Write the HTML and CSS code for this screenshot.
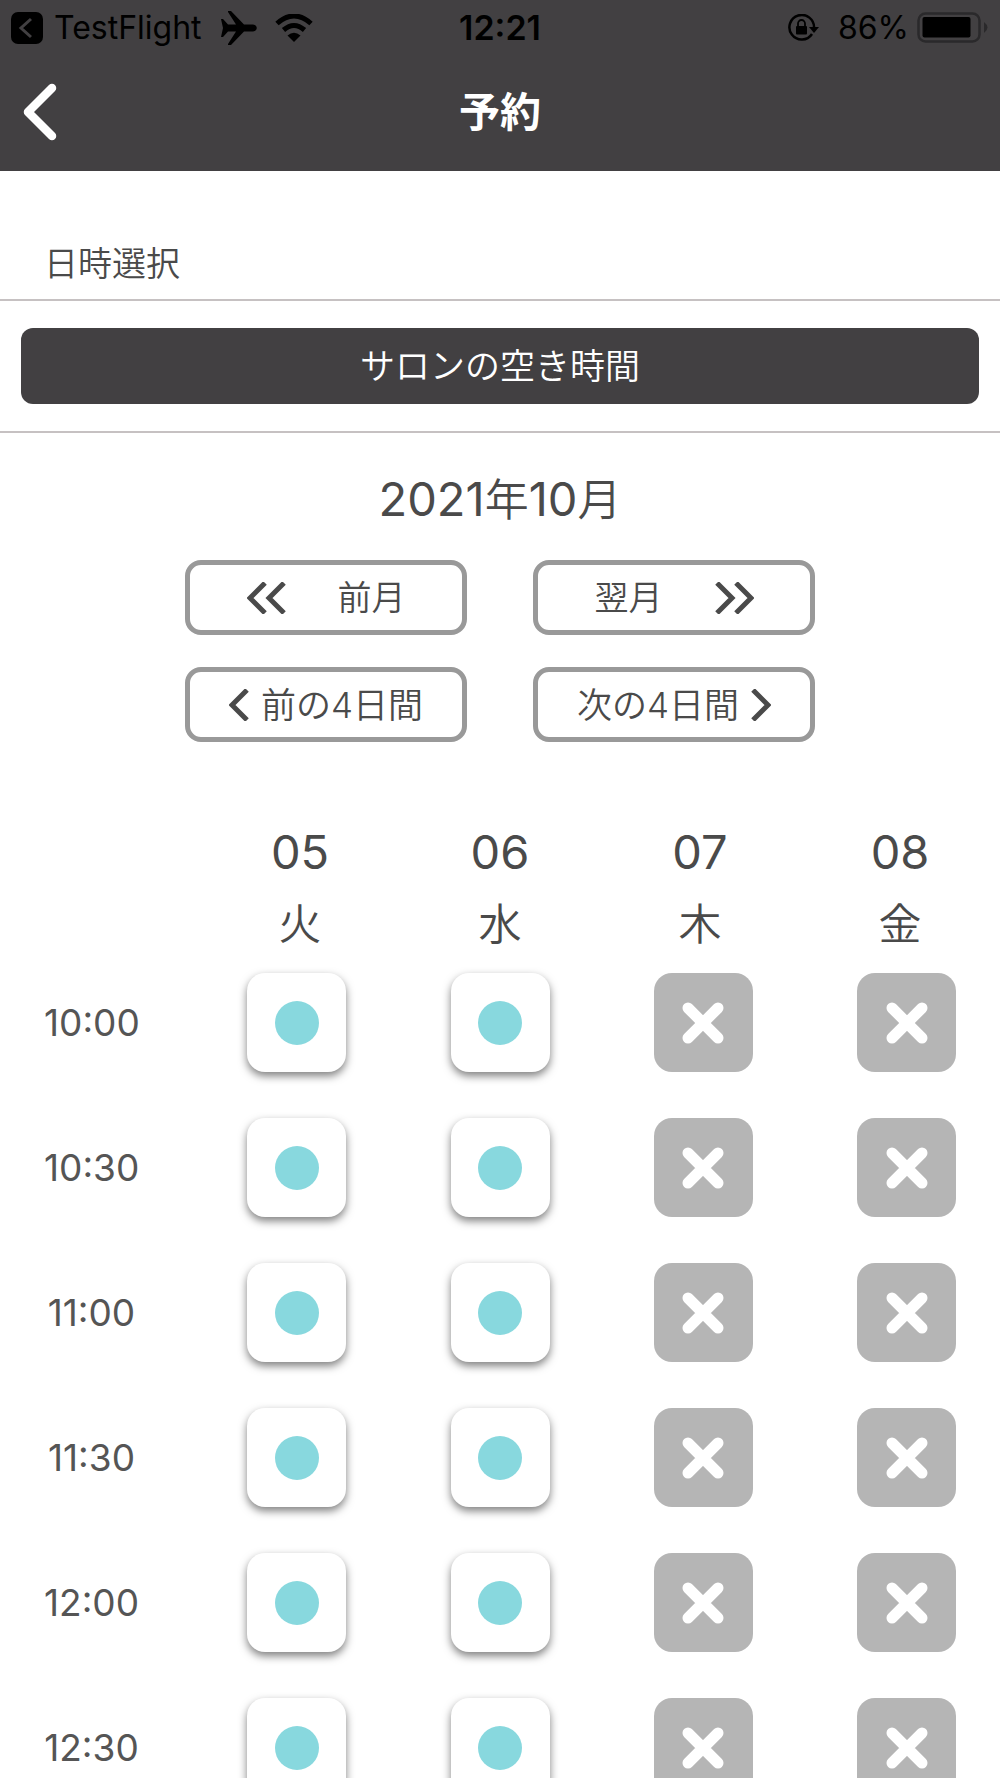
FILE: index.html
```html
<!DOCTYPE html>
<html lang="ja">
<head>
<meta charset="utf-8">
<meta name="viewport" content="width=device-width, initial-scale=1">
<title>予約</title>
<link rel="stylesheet" href="styles.css">
</head>
<body>
<svg class="symbols" aria-hidden="true">
  <symbol id="cross" viewBox="0 0 42 42"><path d="M6 6 36 36M36 6 6 36" fill="none" stroke="currentColor" stroke-width="11" stroke-linecap="round"/></symbol>
  <symbol id="prev" viewBox="0 0 20 32"><path d="M18 1 3 16 18 31" fill="none" stroke="currentColor" stroke-width="5"/></symbol>
  <symbol id="next" viewBox="0 0 20 32"><path d="M2 1 17 16 2 31" fill="none" stroke="currentColor" stroke-width="5"/></symbol>
  <symbol id="prev2" viewBox="0 0 39 32"><path d="M18 1 3 16 18 31M37 1 22 16 37 31" fill="none" stroke="currentColor" stroke-width="5"/></symbol>
  <symbol id="next2" viewBox="0 0 39 32"><path d="M2 1 17 16 2 31M21 1 36 16 21 31" fill="none" stroke="currentColor" stroke-width="5"/></symbol>
</svg>
<div class="screen">
  <header class="header">
    <div class="status">
      <div class="status-left">
        <a class="app-return" href="#"><svg width="32" height="32" viewBox="0 0 32 32"><rect width="32" height="32" rx="7"/><path d="M20 7 10 16 20 25" fill="none" stroke="#424042" stroke-width="3"/></svg>TestFlight</a>
        <svg class="plane" width="37" height="34" viewBox="0 0 37 34"><path d="M1 8H3L8 13.500H16L8 1V0H11L24 13.500H33C38 14 38 20 33 20.500H24L11 34H8V33L16 20.500H8L3 26H1L3 17Z"/></svg>
        <svg class="wifi" width="38" height="28" viewBox="0 0 38 28"><path d="M2 9.500Q19-5.500 36 9.500M8.500 16Q19 7 29.500 16" fill="none" stroke="#000" stroke-width="5"/><path d="M12.500 21.500Q19 16 25.500 21.500L19 28Z"/></svg>
      </div>
      <time class="clock">12:21</time>
      <div class="status-right">
        <svg width="32" height="28" viewBox="0 0 32 28"><path d="M24 20A12.300 12.300 0 1 1 26 14" fill="none" stroke="#000" stroke-width="2.500"/><path d="M21 13H31L26 19Z"/><rect x="8" y="12" width="11" height="8.500" rx="1"/><path d="M10 13V9.500a3.500 3.500 0 0 1 7 0V13" fill="none" stroke="#000" stroke-width="1.800"/></svg>
        <span class="percent">86%</span>
        <svg width="72" height="32" viewBox="0 0 72 32"><rect x="1.500" y="1.500" width="61" height="28" rx="7" fill="none" stroke="#2a292b" stroke-width="2.500"/><rect x="5.500" y="5" width="48" height="20.500" rx="2"/><path d="M67 10Q74 15.500 67 21Z" fill="#2a292b"/></svg>
      </div>
    </div>
    <div class="titlebar">
      <button class="back" type="button" aria-label="戻る"><svg width="34" height="58" viewBox="0 0 34 58"><path d="M29 5 5 29 29 53" fill="none" stroke="#fff" stroke-width="8.500" stroke-linecap="round" stroke-linejoin="round"/></svg></button>
      <h1 class="title">予約</h1>
    </div>
  </header>
  <main class="content">
    <h2 class="section-title">日時選択</h2>
    <div class="salon"><button class="salon-button" type="button">サロンの空き時間</button></div>
    <h3 class="month">2021<span class="unit">年</span>10<span class="unit">月</span></h3>
    <nav class="pager">
      <button class="page-button wide" type="button"><svg width="39" height="32"><use href="#prev2"/></svg>前月</button>
      <button class="page-button wide" type="button">翌月<svg width="39" height="32"><use href="#next2"/></svg></button>
      <button class="page-button" type="button"><svg width="20" height="32"><use href="#prev"/></svg>前の4日間</button>
      <button class="page-button" type="button">次の4日間<svg width="20" height="32"><use href="#next"/></svg></button>
    </nav>
    <table class="schedule">
      <thead>
        <tr><td></td><th scope="col">05<span class="weekday">火</span></th><th scope="col">06<span class="weekday">水</span></th><th scope="col">07<span class="weekday">木</span></th><th scope="col">08<span class="weekday">金</span></th></tr>
      </thead>
      <tbody>
        <tr><th scope="row">10:00</th><td><button class="slot open" type="button" aria-label="空き"></button></td><td><button class="slot open" type="button" aria-label="空き"></button></td><td><button class="slot full" type="button" disabled aria-label="不可"><svg width="42" height="42"><use href="#cross"/></svg></button></td><td><button class="slot full" type="button" disabled aria-label="不可"><svg width="42" height="42"><use href="#cross"/></svg></button></td></tr>
        <tr><th scope="row">10:30</th><td><button class="slot open" type="button" aria-label="空き"></button></td><td><button class="slot open" type="button" aria-label="空き"></button></td><td><button class="slot full" type="button" disabled aria-label="不可"><svg width="42" height="42"><use href="#cross"/></svg></button></td><td><button class="slot full" type="button" disabled aria-label="不可"><svg width="42" height="42"><use href="#cross"/></svg></button></td></tr>
        <tr><th scope="row">11:00</th><td><button class="slot open" type="button" aria-label="空き"></button></td><td><button class="slot open" type="button" aria-label="空き"></button></td><td><button class="slot full" type="button" disabled aria-label="不可"><svg width="42" height="42"><use href="#cross"/></svg></button></td><td><button class="slot full" type="button" disabled aria-label="不可"><svg width="42" height="42"><use href="#cross"/></svg></button></td></tr>
        <tr><th scope="row">11:30</th><td><button class="slot open" type="button" aria-label="空き"></button></td><td><button class="slot open" type="button" aria-label="空き"></button></td><td><button class="slot full" type="button" disabled aria-label="不可"><svg width="42" height="42"><use href="#cross"/></svg></button></td><td><button class="slot full" type="button" disabled aria-label="不可"><svg width="42" height="42"><use href="#cross"/></svg></button></td></tr>
        <tr><th scope="row">12:00</th><td><button class="slot open" type="button" aria-label="空き"></button></td><td><button class="slot open" type="button" aria-label="空き"></button></td><td><button class="slot full" type="button" disabled aria-label="不可"><svg width="42" height="42"><use href="#cross"/></svg></button></td><td><button class="slot full" type="button" disabled aria-label="不可"><svg width="42" height="42"><use href="#cross"/></svg></button></td></tr>
        <tr><th scope="row">12:30</th><td><button class="slot open" type="button" aria-label="空き"></button></td><td><button class="slot open" type="button" aria-label="空き"></button></td><td><button class="slot full" type="button" disabled aria-label="不可"><svg width="42" height="42"><use href="#cross"/></svg></button></td><td><button class="slot full" type="button" disabled aria-label="不可"><svg width="42" height="42"><use href="#cross"/></svg></button></td></tr>
      </tbody>
    </table>
  </main>
</div>
</body>
</html>
```
FILE: styles.css
```css
* { box-sizing: border-box; }
body {
  margin: 0;
  background: #fff;
  color: #4a4a4a;
  font-family: Inter, "Noto Sans CJK JP", sans-serif;
}
button { font: inherit; color: inherit; cursor: pointer; }
svg { display: block; flex: none; }
h1, h2, h3 { margin: 0; }
.symbols { display: none; }

.screen { display: flex; flex-direction: column; height: 100vh; }

.header { flex: none; background: #424042; }
.status {
  display: grid;
  grid-template-columns: 1fr auto 1fr;
  align-items: center;
  height: 56px;
  padding: 0 11px;
  color: #000;
  font-size: 32px;
  line-height: 40px;
}
.status-left, .status-right, .app-return { display: flex; align-items: center; }
.app-return { gap: 11px; color: inherit; text-decoration: none; }
.plane { margin-left: 18px; }
.wifi { margin-left: 18px; }
.clock { font-size: 34px; font-weight: 600; }
.status-right { justify-content: flex-end; }
.percent { margin: 0 8px 0 18px; }

.titlebar {
  display: grid;
  grid-template-columns: 1fr auto 1fr;
  align-items: center;
  height: 115px;
  padding: 0 23px 4px;
  color: #fff;
}
.back { justify-self: start; padding: 0; border: 0; background: none; }
.title { font-size: 41px; line-height: 60px; font-weight: 700; }

.content { flex: 1; overflow-y: auto; scrollbar-width: none; }
.section-title {
  padding: 69px 44px 11px;
  border-bottom: 2px solid #c6c1c2;
  font-size: 34px;
  line-height: 48px;
  font-weight: 350;
}
.salon { padding: 27px 21px; border-bottom: 2px solid #c6c1c2; }
.salon-button {
  display: block;
  width: 100%;
  height: 76px;
  padding: 0 0 6px;
  border: 0;
  border-radius: 12px;
  background: #424042;
  color: #fff;
  font-size: 35px;
  font-weight: 350;
}
.month {
  padding: 34px 0 28px;
  font-size: 47px;
  line-height: 64px;
  font-weight: 400;
  text-align: center;
}
.unit { font-size: 44px; font-weight: 350; }
.pager {
  display: grid;
  grid-template-columns: 282px 282px;
  justify-content: center;
  gap: 32px 66px;
}
.page-button {
  display: flex;
  align-items: center;
  justify-content: center;
  gap: 12px;
  height: 75px;
  padding: 0;
  border: 5px solid #999;
  border-radius: 16px;
  background: #fff;
  font-size: 35px;
  line-height: 48px;
  font-weight: 350;
}
.page-button.wide { gap: 52px; font-size: 34px; }

.schedule { display: block; margin-top: 78px; }
.schedule thead, .schedule tbody { display: block; }
.schedule th, .schedule td { display: block; padding: 0; font-weight: 400; }
.schedule thead tr { display: grid; grid-template-columns: repeat(5, 1fr); }
.schedule thead th { font-size: 47px; line-height: 64px; text-align: center; }
.schedule .weekday { display: block; font-size: 43px; line-height: 80px; font-weight: 350; }
.schedule tbody { padding: 9px 44px 0; }
.schedule tbody tr {
  display: grid;
  grid-template-columns: repeat(5, 99px);
  justify-content: space-between;
  align-items: center;
  margin-bottom: 46px;
}
.schedule tbody th {
  padding-right: 4px;
  color: #555;
  font-size: 37px;
  line-height: 48px;
  text-align: center;
}
.slot {
  display: grid;
  place-items: center;
  width: 99px;
  height: 99px;
  padding: 0;
  border: 0;
  border-radius: 18px;
}
.open { background: #fff; box-shadow: 0 4px 8px rgb(0 0 0 / 50%); }
.open::before { content: ""; width: 44px; height: 44px; border-radius: 50%; background: #88d8de; }
.full { background: #b5b5b5; color: #fff; }
```
